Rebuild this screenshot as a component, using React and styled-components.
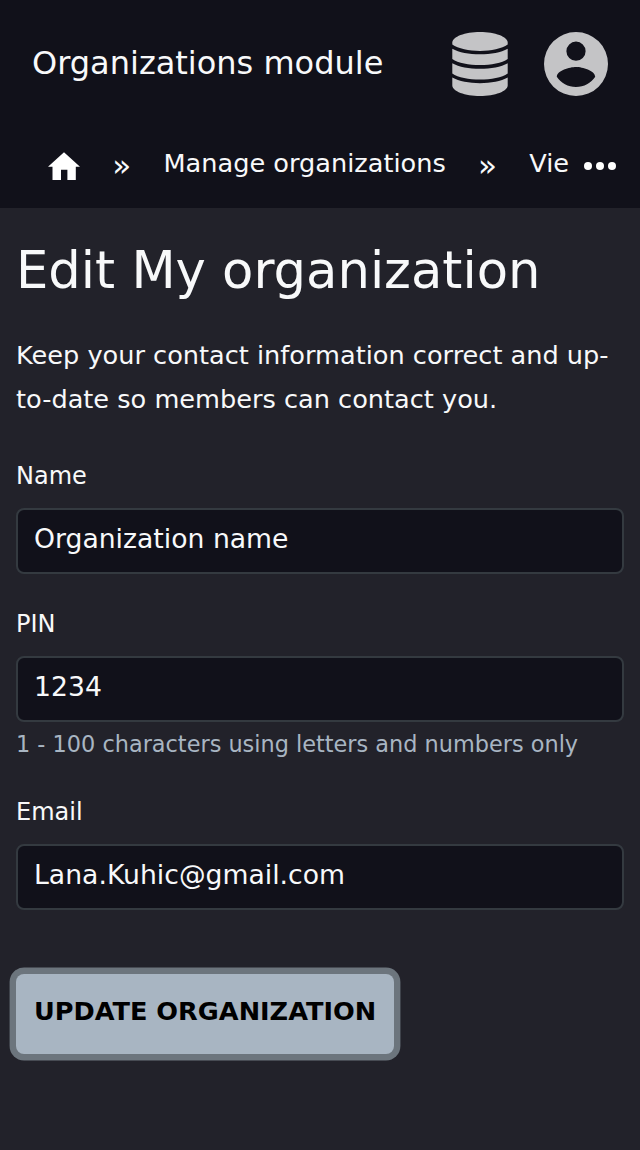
import React from "react";
import styled, { createGlobalStyle } from "styled-components";

const Global = createGlobalStyle`
  * { box-sizing: border-box; }
  body { margin: 0; background: #22222a; color: #f8f9fa; font-family: "DejaVu Sans", sans-serif; }
`;
const Page = styled.div`
  min-height: 1150px;
  overflow: hidden;
`;
const Header = styled.header`
  height: 208px;
  background: #11111a;
`;
const Bar = styled.div`
  height: 128px;
  padding: 0 32px;
  display: flex;
  align-items: center;
  justify-content: space-between;
`;
const ModuleTitle = styled.div`
  padding-bottom: 2px;
  font-size: 32px;
  line-height: 48px;
  white-space: nowrap;
`;
const Actions = styled.div`
  display: flex;
  gap: 32px;
`;
const Icon = styled.svg`
  display: block;
  flex: none;
  width: ${(p) => p.$w}px;
  height: ${(p) => p.$h || p.$w}px;
  fill: ${(p) => p.$color || "#fff"};
`;
const Crumbs = styled.nav`
  height: 72px;
  display: flex;
  align-items: center;
  padding: 0 24px 0 48px;
  font-size: 25.6px;
  line-height: 40px;
  white-space: nowrap;
`;
const Separator = styled.span`
  width: 83.5px;
  flex: none;
  display: flex;
  justify-content: center;
  padding-top: 2px;
  font-size: 31px;
`;
const Crumb = styled.span`
  flex: none;
  padding-bottom: 2px;
`;
const Clipped = styled(Crumb)`
  width: 40px;
  overflow: hidden;
  margin-right: 15px;
`;
const Main = styled.main`
  padding: 31px 16px 0;
`;
const Title = styled.h1`
  margin: 0;
  font-size: 51.2px;
  font-weight: 400;
  line-height: 62px;
`;
const Intro = styled.p`
  margin: 32px 0 0;
  font-size: 25.6px;
  line-height: 44px;
`;
const Field = styled.div`
  margin-top: ${(p) => p.$gap}px;
`;
const Label = styled.label`
  display: block;
  font-size: 24px;
  line-height: 36px;
`;
const Input = styled.input`
  display: block;
  width: 100%;
  height: 66px;
  margin-top: 14px;
  padding: 0 16px 5px;
  border: 2px solid #343a40;
  border-radius: 8px;
  background: #11111a;
  color: #f8f9fa;
  font: 26.66px "DejaVu Sans", sans-serif;
  outline: none;
`;
const Hint = styled.div`
  margin-top: 4px;
  font-size: 22.4px;
  line-height: 36px;
  color: #a8b5c2;
`;
const Submit = styled.button`
  display: block;
  margin-top: 64px;
  width: 378px;
  height: 80px;
  padding: 0 0 7px;
  border: 0;
  border-radius: 8px;
  background: #a8b5c2;
  box-shadow: 0 0 0 6.4px #6c757d;
  color: #000;
  font: bold 25.6px "DejaVu Sans", sans-serif;
  white-space: nowrap;
`;

export default function App() {
  return (
    <Page>
      <Global />
      <Header>
        <Bar>
          <ModuleTitle>Organizations module</ModuleTitle>
          <Actions>
            <Icon $w={64} $color="#c4c4c6" viewBox="0 0 64 64">
              <path d="M32 0C47 0 59.700 4.700 59.700 10.500V12.500C54 16.500 43 18.900 32 18.900S10 16.500 4.300 12.500V10.500C4.300 4.700 17 0 32 0z" />
              <path d="M4.300 16.700C11 20.500 21 22.300 32 22.300S53 20.500 59.700 16.700V27C54 31 43 33.100 32 33.100S10 31 4.300 27z" />
              <path d="M4.300 31.200C11 35 21 36.800 32 36.800S53 35 59.700 31.200V41.500C54 45.500 43 47.600 32 47.600S10 45.500 4.300 41.500z" />
              <path d="M4.300 45.600C11 49.400 21 51.200 32 51.200S53 49.400 59.700 45.600V53.500C59.700 59.300 47 64 32 64S4.300 59.300 4.300 53.500z" />
            </Icon>
            <Icon $w={64} $color="#c4c4c6" viewBox="0 0 64 64">
              <path
                fillRule="evenodd"
                d="M32 0A32 32 0 1 0 32 64A32 32 0 1 0 32 0zM32 9.600A9.600 9.600 0 1 1 32 28.800A9.600 9.600 0 1 1 32 9.600zM32 55C24 55 17 51 12.800 44.700C13 38.300 25.600 34.900 32 34.900S51 38.300 51.200 44.700C47 51 40 55 32 55z"
              />
            </Icon>
          </Actions>
        </Bar>
        <Crumbs>
          <Icon $w={32} viewBox="0 0 32 32">
            <path d="M16 4.300 0 18.700h4.500V32H13V21.700h6.400V32h8.400V18.700H32z" />
          </Icon>
          <Separator>»</Separator>
          <Crumb>Manage organizations</Crumb>
          <Separator>»</Separator>
          <Clipped>Vie</Clipped>
          <Icon $w={32} viewBox="0 0 32 32">
            <circle cx="4" cy="18" r="4" />
            <circle cx="16" cy="18" r="4" />
            <circle cx="28" cy="18" r="4" />
          </Icon>
        </Crumbs>
      </Header>
      <Main>
        <Title>Edit My organization</Title>
        <Intro>Keep your contact information correct and up-to-date so members can contact you.</Intro>
        <Field $gap={37}>
          <Label htmlFor="name">Name</Label>
          <Input id="name" defaultValue="Organization name" />
        </Field>
        <Field $gap={32}>
          <Label htmlFor="pin">PIN</Label>
          <Input id="pin" defaultValue="1234" />
          <Hint>1 - 100 characters using letters and numbers only</Hint>
        </Field>
        <Field $gap={32}>
          <Label htmlFor="email">Email</Label>
          <Input id="email" defaultValue="Lana.Kuhic@gmail.com" />
        </Field>
        <Submit>UPDATE ORGANIZATION</Submit>
      </Main>
    </Page>
  );
}
